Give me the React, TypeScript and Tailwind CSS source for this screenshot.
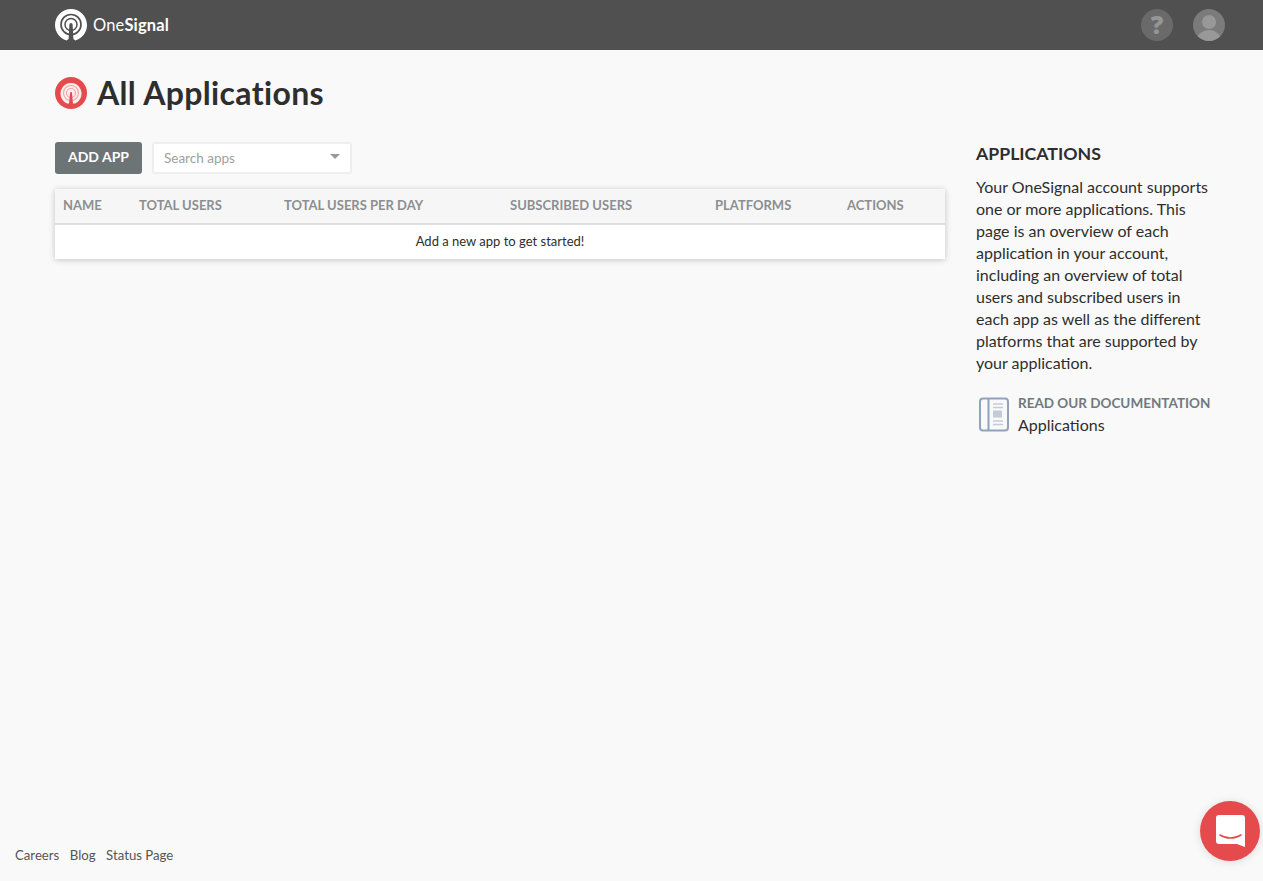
import React from 'react';

const HeaderMark = () => (
	<svg width="32" height="32" viewBox="0 0 32 32" className="shrink-0">
		<path d="M11.5 31.4C4.9 29.5 0 23.3 0 16 0 7.2 7.2 0 16 0s16 7.2 16 16c0 7.3-4.9 13.5-11.5 15.4-1-.4-1.8-1.4-2.5-1.4h-4c-.7 0-1.500 1-2.500 1.400z" fill="#ffffff" />
		<circle cx="16" cy="15.5" r="10" fill="none" stroke="#505050" strokeWidth="1.7" />
		<circle cx="16" cy="15.5" r="6" fill="none" stroke="#505050" strokeWidth="1.5" />
		<path d="M14.4 15.5a1.6 1.6 0 0 1 3.2 0L18.5 32h-5z" fill="#505050" />
	</svg>
);

const TitleMark = () => (
	<svg width="32" height="32" viewBox="0 0 32 32" className="shrink-0">
		<circle cx="16" cy="16" r="16" fill="#e54b4d" />
		<path d="M12 26.5C8.2 25 5.5 20.9 5.5 16.5 5.5 10.700 10.200 6 16 6s10.500 4.700 10.500 10.500c0 4.400-2.700 8.500-6.500 10z" fill="#fdeeee" />
		<circle cx="16" cy="16" r="7.5" fill="none" stroke="#f2a6a8" strokeWidth="1.2" />
		<circle cx="16" cy="16" r="4.5" fill="none" stroke="#f2a6a8" strokeWidth="1.2" />
		<path d="M15 16a1 1 0 0 1 2 0l1 11h-4z" fill="#e54b4d" />
	</svg>
);

const columns = [
	{ label: 'NAME', width: 'w-[76px]' },
	{ label: 'TOTAL USERS', width: 'w-[145px]' },
	{ label: 'TOTAL USERS PER DAY', width: 'w-[226px]' },
	{ label: 'SUBSCRIBED USERS', width: 'w-[205px]' },
	{ label: 'PLATFORMS', width: 'w-[132px]' },
	{ label: 'ACTIONS', width: 'w-[106px]' },
];

const App = () => {
	return (
		<div className="flex flex-col h-[881px] overflow-hidden bg-[#f9f9f9] font-['Lato','Liberation_Sans',sans-serif] text-[#2e2e2e]">
			{/* Top bar */}
			<header className="h-[50px] shrink-0 bg-[#505050] flex items-center justify-between pl-[55px] pr-[38px]">
				<div className="flex items-center gap-[6px]">
					<HeaderMark />
					<span className="text-[16.5px] text-white tracking-[0.15px]">
						One<span className="font-bold">Signal</span>
					</span>
				</div>
				<div className="flex items-center gap-[20px]">
					<div className="w-8 h-8 rounded-full bg-[#6a6a6a] flex items-center justify-center text-[#969696] text-[25px] font-extrabold font-['Open_Sans',sans-serif]">?</div>
					<div className="w-8 h-8 rounded-full bg-[#7b7b7b] overflow-hidden">
						<svg width="32" height="32" viewBox="0 0 32 32">
							<circle cx="16" cy="13" r="7" fill="#989898" />
							<path d="M3 32c1-7 7-11 13-11s12 4 13 11z" fill="#989898" />
						</svg>
					</div>
				</div>
			</header>

			<main className="flex-1 px-[55px] flex flex-col">
				<div className="flex items-center gap-[10px] mt-[27px] h-[32px]">
					<TitleMark />
					<h1 className="text-[32px] font-bold leading-none tracking-[0.35px]">All Applications</h1>
				</div>

				<div className="flex mt-[33px]">
					<div className="w-[890px] shrink-0">
						<div className="flex items-center gap-[10px]">
							<button className="h-[32px] w-[87px] pb-[4px] rounded-[3px] bg-[#6c7476] text-white text-[14px] font-bold">ADD APP</button>
							<div className="h-[32px] w-[200px] bg-white border-2 border-[#eeeeee] rounded-[3px] flex items-center justify-between pl-[10px] pr-[10px]">
								<span className="text-[13.5px] text-[#a0a0a0]">Search apps</span>
								<span className="w-0 h-0 border-x-[5px] border-x-transparent border-t-[5px] border-t-[#999999] mb-[3px]" />
							</div>
						</div>

						<div className="mt-[15px] bg-white shadow-[0_1px_6px_rgba(0,0,0,0.22)]">
							<div className="flex h-[36px] items-center bg-[#f6f6f6] border-b-2 border-[#dfdfdf]">
								{columns.map((col) => (
									<div key={col.label} className={`${col.width} pl-[8px] text-[13px] font-bold text-[#8c8f91]`}>
										{col.label}
									</div>
								))}
							</div>
							<div className="h-[34px] flex items-center justify-center text-[13px] text-[#2e2e2e]">
								Add a new app to get started!
							</div>
						</div>
					</div>

					<aside className="ml-[31px] w-[236px]">
						<h2 className="text-[17.7px] font-bold leading-[24px]">APPLICATIONS</h2>
						<p className="mt-[10px] text-[16px] leading-[22px]">
							Your OneSignal account supports one or more applications. This page is an overview of each application in your account, including an overview of total users and subscribed users in each app as well as the different platforms that are supported by your application.
						</p>
						<div className="flex items-center mt-[19px] ml-[3px] gap-[9px]">
							<svg width="30" height="35" viewBox="0 0 30 35" className="shrink-0">
								<rect x="1" y="1.5" width="28" height="32" rx="3" fill="none" stroke="#8fa3bb" strokeWidth="2" />
								<path d="M9.5 2v31" stroke="#8fa3bb" strokeWidth="2" />
								<path d="M14 7h10M14 10.5h10M14 24h10M14 27.5h10" stroke="#c2ccd8" strokeWidth="1.4" />
								<rect x="14" y="13.5" width="9" height="7" fill="#c2ccd8" />
							</svg>
							<div>
								<div className="text-[13.5px] font-bold text-[#6f7a80] leading-[21px] whitespace-nowrap">READ OUR DOCUMENTATION</div>
								<div className="text-[16px] leading-[21px]">Applications</div>
							</div>
						</div>
					</aside>
				</div>
			</main>

			<footer className="h-[35px] shrink-0 pl-[15px] flex gap-[10.5px] text-[13.2px] text-[#555555]">
				<span>Careers</span>
				<span>Blog</span>
				<span>Status Page</span>
			</footer>

			{/* Chat launcher */}
			<div className="fixed right-[3px] bottom-[20px] w-[60px] h-[60px] rounded-full bg-[#e54b4d] shadow-[0_1px_10px_rgba(0,0,0,0.12)] flex items-center justify-center">
				<svg width="29" height="33" viewBox="0 0 29 33">
					<path d="M3 0h23a3 3 0 0 1 3 3v29l-8-3H3a3 3 0 0 1-3-3V3a3 3 0 0 1 3-3z" fill="#ffffff" />
					<path d="M4 20c6 4 15 4 21 0" fill="none" stroke="#e54b4d" strokeWidth="1.6" strokeLinecap="round" />
				</svg>
			</div>
		</div>
	);
};

export default App;
